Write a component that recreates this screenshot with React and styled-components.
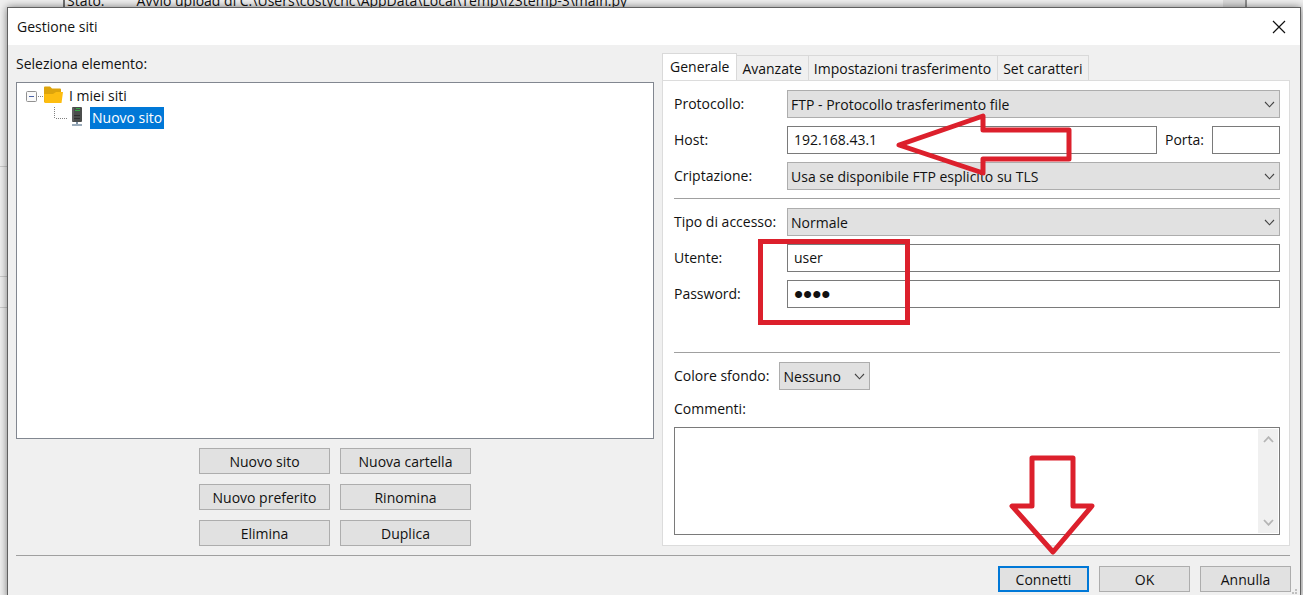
import React from 'react'
import styled, { createGlobalStyle } from 'styled-components'

const GlobalStyle = createGlobalStyle`
  * {
    box-sizing: border-box;
  }
  html {
    background: #f0f0f0;
  }
  body {
    margin: 0;
    overflow: hidden;
    color: #111;
    font-family: 'Open Sans', 'Noto Sans', sans-serif;
    font-size: 14px;
    line-height: 20px;
  }
  button,
  input,
  select,
  textarea {
    font: inherit;
    color: inherit;
    border-radius: 0;
    outline: none;
  }
`

const Desktop = styled.div`
  position: relative;
  padding: 0 2px 0 7px;
  /* edges of the window behind the dialog */
  background:
    linear-gradient(#ccc, #ccc) 0 166px / 7px 1px no-repeat,
    linear-gradient(#ccc, #ccc) 0 276px / 7px 1px no-repeat,
    linear-gradient(#ccc, #ccc) 0 307px / 7px 1px no-repeat;
`

const LogStrip = styled.div`
  display: flex;
  align-items: flex-end;
  gap: 32px;
  height: 7px;
  margin: 0 54px 0 56px;
  padding-left: 2px;
  border-left: 2px solid #707070;
  border-right: 2px solid #909090;
  overflow: hidden;
  line-height: 12px;
  white-space: nowrap;
`

const LogThumb = styled.span`
  width: 22px;
  height: 7px;
  margin-left: auto;
  background: #dcdcdc;
`

const Dialog = styled.main`
  position: relative;
  border: 1px solid #606060;
  background: #f0f0f0;
  box-shadow: 0 0 8px rgba(0, 0, 0, 0.5);
`

const TitleBar = styled.header`
  display: flex;
  align-items: center;
  justify-content: space-between;
  height: 37px;
  padding: 0 14px 0 9px;
  background: #fff;
`

const Title = styled.h1`
  margin: 0;
  font-size: 14px;
  font-weight: 400;
`

const CloseButton = styled.button`
  display: flex;
  padding: 0;
  border: 0;
  background: none;
`

const Content = styled.div`
  display: grid;
  grid-template-columns: 638fr 628fr;
  gap: 8px;
  margin: 0 10px 0 8px;
  padding: 8px 0 9px;
  border-bottom: 1px solid #a0a0a0;
`

const SitesPane = styled.section`
  display: flex;
  flex-direction: column;
`

const PaneTitle = styled.h2`
  margin: 1px 0 8px;
  font-size: 14px;
  font-weight: 400;
`

const Tree = styled.ul`
  flex: 1;
  margin: 0 0 9px;
  padding: 2px 9px;
  border: 1px solid #828790;
  background: #fff;
  list-style: none;
`

const TreeRow = styled.li`
  display: flex;
  align-items: center;
  height: 22px;
  padding-left: ${({ $level }) => ($level ? 28 : 0)}px;
`

const TreeLabel = styled.span`
  padding: 0 2px;
  line-height: 22px;
  color: ${({ $selected }) => ($selected ? '#fff' : 'inherit')};
  background: ${({ $selected }) => ($selected ? '#0078d7' : 'none')};
`

const SiteActions = styled.div`
  display: grid;
  grid-template-columns: 131px 131px;
  justify-content: center;
  gap: 10px;
`

const Button = styled.button`
  height: 26px;
  padding: 2px 0 0;
  border: ${({ $primary }) => ($primary ? '2px solid #0078d7' : '1px solid #adadad')};
  background: #e1e1e1;
  line-height: 20px;
`

const SettingsPane = styled.section`
  display: flex;
  flex-direction: column;
`

const Tabs = styled.div`
  display: flex;
  align-items: flex-end;
  height: 27px;
`

const Tab = styled.button`
  height: ${({ $active }) => ($active ? 28 : 25)}px;
  margin-bottom: ${({ $active }) => ($active ? -1 : 0)}px;
  padding: ${({ $active }) => ($active ? '0 7px 2px' : '2px 6px 0 5px')};
  border: 1px solid #d9d9d9;
  border-bottom: 0;
  border-left-width: ${({ $active }) => ($active ? 1 : 0)}px;
  background: ${({ $active }) => ($active ? '#fff' : '#f0f0f0')};
  white-space: nowrap;
`

const TabPanel = styled.div`
  padding: 9px 9px 10px 11px;
  border: 1px solid #dcdcdc;
  background: #fff;
`

const Fields = styled.div`
  display: grid;
  grid-template-columns: 105px 1fr;
  align-items: center;
  row-gap: 8px;
  column-gap: 8px;
  padding-bottom: ${({ $bottom }) => $bottom}px;
  margin-bottom: 9px;
  border-bottom: 1px solid #a0a0a0;
`

const Label = styled.label`
  white-space: nowrap;
`

const HostRow = styled.div`
  display: flex;
  align-items: center;
  gap: 8px;
`

const TextInput = styled.input`
  flex: ${({ $width }) => ($width ? 'none' : '1')};
  width: ${({ $width }) => $width || '100%'};
  min-width: 0;
  height: 28px;
  padding: 0 6px 2px;
  border: 1px solid #7a7a7a;
  background: #fff;
  &[type='password'] {
    padding-bottom: 0;
    font-family: 'Liberation Sans', sans-serif;
    font-size: 26px;
  }
`

const SelectBox = styled.div`
  display: grid;
  align-items: center;
  > * {
    grid-area: 1 / 1;
  }
  > svg {
    justify-self: end;
    margin-right: 5px;
    pointer-events: none;
  }
`

const Select = styled.select`
  width: ${({ $width }) => $width || '100%'};
  height: 28px;
  padding: 2px 3px 0;
  border: 1px solid #adadad;
  background: #e1e1e1;
  appearance: none;
`

const ColorRow = styled.div`
  display: flex;
  align-items: center;
  gap: 10px;
  margin-bottom: 9px;
`

const CommentBox = styled.div`
  display: flex;
  height: 108px;
  margin-top: 8px;
  padding: 1px;
  border: 1px solid #7a7a7a;
`

const Comments = styled.textarea`
  flex: 1;
  border: 0;
  padding: 4px;
  background: #fff;
  resize: none;
`

const ScrollBar = styled.div`
  display: flex;
  flex-direction: column;
  justify-content: space-between;
  align-items: center;
  width: 20px;
  padding: 7px 0;
  background: #f0f0f0;
`

const Footer = styled.footer`
  display: flex;
  justify-content: flex-end;
  gap: 10px;
  padding: 10px 9px 6px;
  ${Button} {
    width: 91px;
  }
`

const Grip = styled.svg`
  position: absolute;
  right: 2px;
  bottom: 0;
`

const RedMark = styled.svg`
  position: absolute;
  left: ${({ $x }) => $x}px;
  top: ${({ $y }) => $y}px;
  pointer-events: none;
  fill: none;
  stroke: #dc202c;
  stroke-width: 5;
  stroke-linejoin: round;
`

function Chevron({ up, color = '#444' }) {
  return (
    <svg width="11" height="7" viewBox="0 0 11 7" fill="none" stroke={color} strokeWidth={up !== undefined ? 1.8 : 1.1}>
      <path d={up ? 'M1 6 5.500 1.200 10 6' : 'M1 1 5.500 5.800 10 1'} />
    </svg>
  )
}

function FolderBranch() {
  return (
    <svg width="41" height="22" viewBox="0 0 41 22">
      <rect x="0.500" y="6.500" width="10" height="10" rx="1" fill="#fafafa" stroke="#919191" />
      <path d="M3 11.500h5" stroke="#4b63a7" />
      <path d="M12 11.500h6" stroke="#808080" strokeDasharray="1 1" />
      <path d="M18 2.500q0-1 1-1h5l2 2h8q1 0 1 1V17H18z" fill="#dda40c" />
      <path d="M18 9h9l3-2h7l-1.500 11H18.500z" fill="#fdbd10" />
    </svg>
  )
}

function ServerBranch() {
  return (
    <svg width="36" height="22" viewBox="0 0 36 22">
      <path d="M0.500 0v11H14" fill="none" stroke="#808080" strokeDasharray="1 1" shapeRendering="crispEdges" />
      <rect x="18" y="0" width="10" height="15" rx="1" fill="#4b4d4c" />
      <path d="M19 1v13" stroke="#777" />
      <path d="M21 3.500h5M22 1.500h4" stroke="#38a845" />
      <path d="M20 8.500h6M20 11.500h6" stroke="#303030" />
      <path d="M23 15v3" stroke="#8093a6" strokeWidth="2" />
      <path d="M18 18h10" stroke="#9aabba" strokeWidth="2" />
    </svg>
  )
}

function SelectField({ id, label, value, width }) {
  return (
    <>
      <Label htmlFor={id}>{label}</Label>
      <SelectBox>
        <Select id={id} $width={width}>
          <option>{value}</option>
        </Select>
        <Chevron />
      </SelectBox>
    </>
  )
}

const siteActions = ['Nuovo sito', 'Nuova cartella', 'Nuovo preferito', 'Rinomina', 'Elimina', 'Duplica']
const tabs = ['Generale', 'Avanzate', 'Impostazioni trasferimento', 'Set caratteri']

function App() {
  return (
    <Desktop>
      <GlobalStyle />
      <LogStrip>
        <span>Stato:</span>
        <span>Avvio upload di C:\Users\costycnc\AppData\Local\Temp\fz3temp-3\main.py</span>
        <LogThumb />
      </LogStrip>
      <Dialog>
        <TitleBar>
          <Title>Gestione siti</Title>
          <CloseButton type="button" aria-label="Chiudi">
            <svg width="14" height="14" viewBox="0 0 14 14" stroke="#111" strokeWidth="1.2">
              <path d="M1 1l12 12M13 1 1 13" />
            </svg>
          </CloseButton>
        </TitleBar>
        <Content>
          <SitesPane>
            <PaneTitle>Seleziona elemento:</PaneTitle>
            <Tree>
              <TreeRow>
                <FolderBranch />
                <TreeLabel>I miei siti</TreeLabel>
              </TreeRow>
              <TreeRow $level={1}>
                <ServerBranch />
                <TreeLabel $selected>Nuovo sito</TreeLabel>
              </TreeRow>
            </Tree>
            <SiteActions>
              {siteActions.map((action) => (
                <Button type="button" key={action}>
                  {action}
                </Button>
              ))}
            </SiteActions>
          </SitesPane>
          <SettingsPane>
            <Tabs role="tablist">
              {tabs.map((tab, i) => (
                <Tab type="button" role="tab" aria-selected={i === 0} $active={i === 0} key={tab}>
                  {tab}
                </Tab>
              ))}
            </Tabs>
            <TabPanel role="tabpanel">
              <Fields $bottom={8}>
                <SelectField id="protocol" label="Protocollo:" value="FTP - Protocollo trasferimento file" />
                <Label htmlFor="host">Host:</Label>
                <HostRow>
                  <TextInput id="host" defaultValue="192.168.43.1" />
                  <Label htmlFor="port">Porta:</Label>
                  <TextInput id="port" $width="68px" />
                </HostRow>
                <SelectField id="encryption" label="Criptazione:" value="Usa se disponibile FTP esplicito su TLS" />
              </Fields>
              <Fields $bottom={44}>
                <SelectField id="logon" label="Tipo di accesso:" value="Normale" />
                <Label htmlFor="user">Utente:</Label>
                <TextInput id="user" defaultValue="user" />
                <Label htmlFor="password">Password:</Label>
                <TextInput id="password" type="password" defaultValue="user" />
              </Fields>
              <ColorRow>
                <SelectField id="color" label="Colore sfondo:" value="Nessuno" width="91px" />
              </ColorRow>
              <Label htmlFor="comments">Commenti:</Label>
              <CommentBox>
                <Comments id="comments" />
                <ScrollBar>
                  <Chevron up color="#b5b5b5" />
                  <Chevron up={false} color="#b5b5b5" />
                </ScrollBar>
              </CommentBox>
            </TabPanel>
          </SettingsPane>
        </Content>
        <Footer>
          <Button type="button" $primary>
            Connetti
          </Button>
          <Button type="button">OK</Button>
          <Button type="button">Annulla</Button>
        </Footer>
        <Grip width="9" height="9" viewBox="0 0 9 9" fill="#bfbfbf">
          <path d="M6 0h2v2H6zM3 3h2v2H3zM6 3h2v2H6zM0 6h2v2H0zM3 6h2v2H3zM6 6h2v2H6z" />
        </Grip>
      </Dialog>
      <RedMark $x={896} $y={112} width="178" height="68" viewBox="0 0 178 68">
        <path d="M3 33 87 4v14h86v29H87v14z" />
      </RedMark>
      <RedMark $x={758} $y={238} width="152" height="88" viewBox="0 0 152 88">
        <path d="M2.500 3.500h147v81H2.500z" strokeLinejoin="miter" />
      </RedMark>
      <RedMark $x={1008} $y={454} width="90" height="104" viewBox="0 0 90 104">
        <path d="M24 4h41v48h19L45 98 4 52h20z" />
      </RedMark>
    </Desktop>
  )
}

export default App
